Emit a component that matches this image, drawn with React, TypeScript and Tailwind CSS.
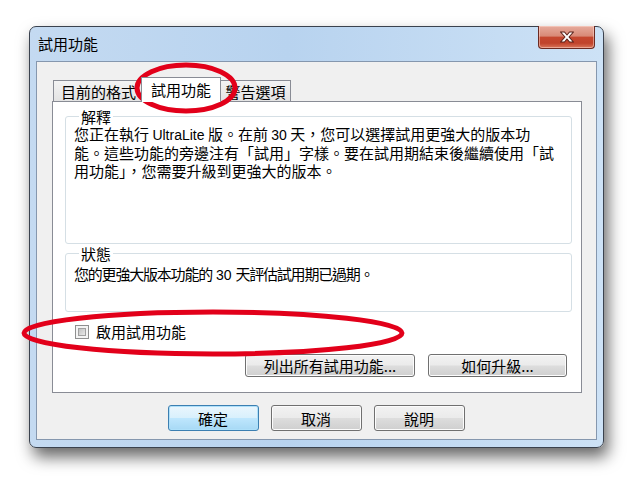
const font = "font-['Noto_Sans_CJK_TC','Noto_Sans_CJK_JP',sans-serif]";
const latin = "font-['Liberation_Sans',sans-serif] text-[14px]";

const CloseIcon = () => (
  <svg width="16" height="12" viewBox="0 0 16 12">
    <path
      d="M1.5 1h4l2.5 3 2.5-3h4l-4.5 5 4.5 5h-4L8 8l-2.5 3h-4L6 6z"
      fill="#fff"
      stroke="#5a2119"
      strokeWidth="1.1"
      strokeLinejoin="round"
    />
  </svg>
);

const WinButton = ({ label, className = '' }: { label: string; className?: string }) => (
  <button
    className={`h-[23px] rounded-[3px] border border-[#707070] bg-[linear-gradient(180deg,#f2f2f2_0%,#ebebeb_48%,#dddddd_52%,#cfcfcf_100%)] text-[15px] leading-none shadow-[inset_0_0_0_1px_#fcfcfc] ${className}`}
  >
    {label}
  </button>
);

export default function App() {
  return (
    <div className={`relative w-[640px] h-[486px] bg-white pl-[29px] pt-[26px] text-[15px] text-black ${font}`}>
      {/* Window */}
      <div className="w-[575px] h-[422px] rounded-[7px] border border-[#3a424e] bg-[linear-gradient(90deg,#c4daf1_0%,#b8d3ef_45%,#cde2f6_100%)] shadow-[4px_9px_16px_rgba(0,0,0,0.6)] flex flex-col px-[6px] pb-[7px]">
        {/* Title bar */}
        <div className="h-[34px] flex items-start justify-between">
          <span className="pl-[2px] pt-[8px] leading-[18px]">試用功能</span>
          <button className="-mt-px mr-[2px] w-[57px] h-[23px] rounded-b-[4px] border border-t-0 border-[#6b2a22] bg-[linear-gradient(180deg,#e6ab9d_0%,#d98a77_45%,#c5472f_52%,#c0432c_78%,#d9765b_100%)] flex items-center justify-center shadow-[inset_0_0_0_1px_rgba(255,220,210,0.5)]">
            <CloseIcon />
          </button>
        </div>

        {/* Client area */}
        <div className="flex-1 border border-[#8597ae] bg-[#f0f0f0] flex flex-col pl-[15px] pr-[14px] pt-[15px]">
          {/* Tabs */}
          <div className="flex items-end h-[24px] pl-[1px]">
            <div className="w-[88px] h-[21px] border border-r-0 border-b-0 border-[#898c95] bg-[linear-gradient(180deg,#f3f3f3,#e3e3e3)] flex items-center justify-center leading-none pl-[2px]">
              目前的格式
            </div>
            <div className="relative z-10 -mb-px w-[80px] h-[25px] border border-b-0 border-[#898c95] bg-white flex items-center justify-center leading-none pb-[2px]">
              試用功能
            </div>
            <div className="w-[70px] h-[21px] border border-l-0 border-b-0 border-[#898c95] bg-[linear-gradient(180deg,#f3f3f3,#e3e3e3)] flex items-center justify-center leading-none">
              警告選項
            </div>
          </div>

          {/* Tab panel */}
          <div className="h-[292px] border border-[#898c95] bg-white flex flex-col pl-[12px] pr-[9px] pt-[7px]">
            <fieldset className="h-[135px] border border-[#d5dfe5] rounded-[3px] pl-[8px]">
              <legend className="ml-[5px] px-[2px] leading-[15px]">解釋</legend>
              <div className="pt-[1px] leading-[18px] whitespace-nowrap">
                <div>
                  您正在執行 <span className={latin}>UltraLite</span> 版。在前 <span className={latin}>30</span> 天，您可以選擇試用更強大的版本功
                </div>
                <div>能。這些功能的旁邊注有「試用」字樣。要在試用期結束後繼續使用「試</div>
                <div>用功能」，您需要升級到更強大的版本。</div>
              </div>
            </fieldset>

            <fieldset className="mt-[2px] h-[66px] border border-[#d5dfe5] rounded-[3px] pl-[8px]">
              <legend className="ml-[5px] px-[2px] leading-[15px]">狀態</legend>
              <div className="pt-[4px] leading-[18px] whitespace-nowrap tracking-[-1.2px]">
                您的更強大版本功能的<span className={`${latin} tracking-normal`}> 30 </span>天評估試用期已過期。
              </div>
            </fieldset>

            <label className="mt-[12px] ml-[10px] flex items-center gap-[7px] leading-none">
              <span className="w-[14px] h-[14px] border border-[#8e8f8f] bg-[#f4f4f4] p-[2px] flex">
                <span className="flex-1 border border-[#a0a0a0] bg-[linear-gradient(135deg,#c2c2c2,#e8e8e8)]" />
              </span>
              啟用試用功能
            </label>

            <div className="mt-[15px] flex justify-end gap-[13px] pr-[5px]">
              <WinButton label="列出所有試用功能..." className="w-[170px]" />
              <WinButton label="如何升級..." className="w-[139px]" />
            </div>
          </div>

          {/* Dialog buttons */}
          <div className="flex justify-center gap-[12px] pt-[12px] pr-[2px]">
            <button className="w-[91px] h-[26px] rounded-[3px] border border-[#3c7fb1] bg-[linear-gradient(180deg,#eaf6fd_0%,#d9f0fc_48%,#bee6fd_52%,#a7d9f5_100%)] shadow-[inset_0_0_0_1px_#aee0fa] leading-none">
              確定
            </button>
            <WinButton label="取消" className="w-[91px] !h-[26px]" />
            <WinButton label="說明" className="w-[91px] !h-[26px]" />
          </div>
        </div>
      </div>

      {/* Red annotation ellipses */}
      <svg className="absolute left-0 top-0 pointer-events-none" width="640" height="486">
        <ellipse cx="186" cy="88" rx="49" ry="23" fill="none" stroke="#e2001a" strokeWidth="5" />
        <ellipse cx="213" cy="333" rx="189" ry="21" fill="none" stroke="#e2001a" strokeWidth="5" />
      </svg>
    </div>
  );
}
